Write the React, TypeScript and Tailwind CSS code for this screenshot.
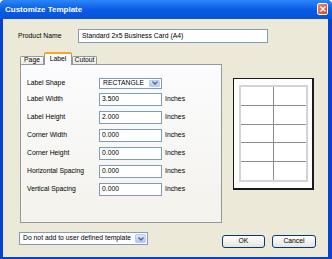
import React from "react";

const font = { fontFamily: '"Liberation Sans", Arial, sans-serif' };

function ComboArrow() {
  return (
    <span className="flex h-full w-[11px] shrink-0 items-center justify-center rounded-[1px] border border-[#b9cdf5] bg-gradient-to-b from-[#dbe6fd] to-[#b1c7f7]">
      <svg width="6" height="4" viewBox="0 0 6 4">
        <path d="M0.5 0.5 L3 3 L5.5 0.5" stroke="#4d6185" strokeWidth="1.3" fill="none" />
      </svg>
    </span>
  );
}

function Combo({ value, className }: { value: string; className: string }) {
  return (
    <div className={`flex items-stretch border border-[#7f9db9] bg-white p-px ${className}`}>
      <span className="flex flex-1 items-center pl-[2px] leading-none text-black">{value}</span>
      <ComboArrow />
    </div>
  );
}

function Field({ label, value }: { label: string; value: string }) {
  return (
    <div className="flex h-[13px] items-center">
      <span className="w-[72px] shrink-0">{label}</span>
      <div className="flex h-[13px] w-[63px] items-center border border-[#7f9db9] bg-white pl-[2px]">{value}</div>
      <span className="ml-[3px]">Inches</span>
    </div>
  );
}

function XpButton({ label, className }: { label: string; className: string }) {
  return (
    <button className={`flex h-[13px] items-center justify-center rounded-[3px] border border-[#003c74] bg-gradient-to-b from-white to-[#e6e4dc] leading-none text-black ${className}`}>
      {label}
    </button>
  );
}

export default function App() {
  const fields = [
    ["Label Width", "3.500"],
    ["Label Height", "2.000"],
    ["Corner Width", "0.000"],
    ["Corner Height", "0.000"],
    ["Horizontal Spacing", "0.000"],
    ["Vertical Spacing", "0.000"],
  ];

  return (
    <div className="flex h-[259px] w-[332px] flex-col overflow-hidden rounded-t-[5px] bg-[#0843d0] text-[6.8px] text-black" style={font}>
      {/* title bar */}
      <div className="flex h-[19px] shrink-0 items-center bg-gradient-to-b from-[#2d86f8] via-[#0a5ce6] to-[#0752d8] pl-[5px] pr-[4px]">
        <span className="text-[8px] font-bold text-white">Customize Template</span>
        <span className="ml-auto mt-[-1px] flex h-[12px] w-[11px] items-center justify-center rounded-[2px] border border-white bg-gradient-to-br from-[#e98c6e] to-[#c8401f]">
          <svg width="6" height="6" viewBox="0 0 6 6">
            <path d="M0.5 0.5 L5.5 5.5 M5.5 0.5 L0.5 5.5" stroke="white" strokeWidth="1.4" />
          </svg>
        </span>
      </div>

      {/* body */}
      <div className="mb-[2px] ml-[3px] mr-[4px] flex flex-1 flex-col bg-[#ece9d8] pt-[10px]">
        <div className="flex items-center pl-[15px]">
          <span className="w-[60px] shrink-0">Product Name</span>
          <div className="flex h-[14px] w-[190px] items-center border border-[#7f9db9] bg-white pl-[3px]">
            Standard 2x5 Business Card (A4)
          </div>
        </div>

        <div className="mt-[9px] flex">
          {/* tabs */}
          <div className="ml-[17px] flex w-[202px] flex-col">
            <div className="flex h-[12px] items-end">
              <div className="flex h-[8px] w-[24px] items-center justify-center rounded-t-[2px] border border-b-0 border-[#919b9c] bg-gradient-to-b from-white to-[#ecebe5]">
                Page
              </div>
              <div className="relative z-10 -mb-px flex h-[13px] w-[28px] items-center justify-center rounded-t-[2px] border-x border-t-2 border-[#919b9c] border-t-[#f5a623] bg-[#fcfcfe]">
                Label
              </div>
              <div className="flex h-[8px] w-[25px] items-center justify-center rounded-t-[2px] border border-b-0 border-[#919b9c] bg-gradient-to-b from-white to-[#ecebe5]">
                Cutout
              </div>
            </div>
            <div className="flex h-[159px] flex-col gap-[5px] border border-[#919b9c] bg-gradient-to-b from-[#fcfcfe] to-[#f3f2ec] pl-[6px] pt-[13px]">
              <div className="flex h-[10px] items-center">
                <span className="w-[72px] shrink-0">Label Shape</span>
                <Combo value="RECTANGLE" className="h-[11px] w-[63px]" />
              </div>
              {fields.map(([l, v]) => (
                <Field key={l} label={l} value={v} />
              ))}
            </div>
          </div>

          {/* preview */}
          <div className="ml-[11px] mt-[26px] flex h-[112px] w-[81px] items-start border border-r-2 border-b-2 border-[#1a1a1a] bg-white pl-[5px] pt-[6px]">
            <div className="grid h-[97px] w-[69px] grid-cols-2 grid-rows-5 gap-px border-2 border-[#d4d4d4] bg-[#8c8c8c]">
              {Array.from({ length: 10 }).map((_, i) => (
                <div key={i} className="bg-white" />
              ))}
            </div>
          </div>
        </div>

        <div className="mt-[9px] flex items-start">
          <Combo value="Do not add to user defined template" className="ml-[16px] h-[13px] w-[129px]" />
          <div className="ml-auto mr-[12px] mt-[3px] flex gap-[7px]">
            <XpButton label="OK" className="w-[43px]" />
            <XpButton label="Cancel" className="w-[44px]" />
          </div>
        </div>
      </div>
    </div>
  );
}
